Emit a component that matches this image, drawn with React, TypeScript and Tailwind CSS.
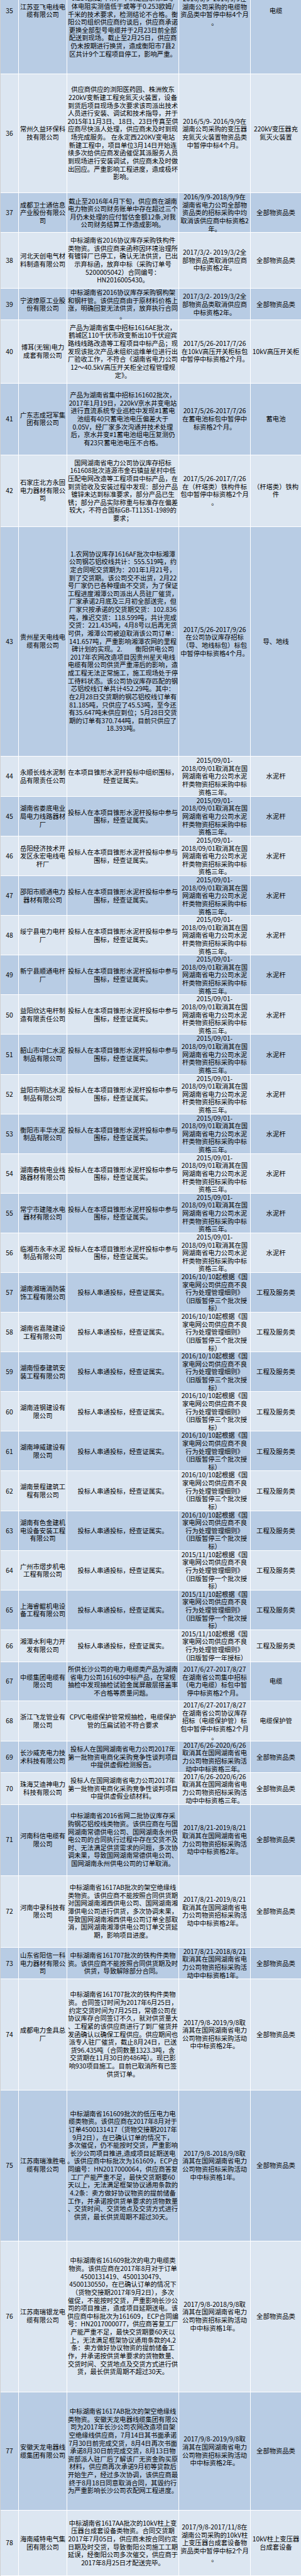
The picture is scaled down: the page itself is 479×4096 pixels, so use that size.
import React from 'react';
import clsx from 'clsx';

type Row = {
  n: number;
  h: string;
  c2: string[];
  c3: string[];
  c4: string[];
  c5: string[];
  c3Class?: string;
};

// shared cell texts
const poleText = ['投标人在本项目锥形水泥杆投标中参与', '围标，经查证属实。'];
const poleBan = ['2015/09/01-', '2018/09/01取消其在国', '网湖南省电力公司水泥', '杆类物资招标采购中标', '资格三年。'];
const collusion = ['投标人串通投标，经查证属实。'];
const ban2016 = ['2016/10/10起根据《国', '家电网公司供应商不良', '行为处理管理细则》', '（旧版暂停三个批次授', '标）'];
const ban2015 = ['2015/11/10起根据《国', '家电网公司供应商不良', '行为处理管理细则》', '（旧版暂停一个批次授', '标）'];
const all = ['全部物资品类'];
const pole = ['水泥杆'];
const works = ['工程及服务类'];
const ban2y = ['2017/3/2- 2019/3/2全', '部物资品类取消供应商', '中标资格2年。'];
const ban3y = ['2017/6/26-2020/6/26', '取消其在国网湖南省电', '力公司物资招标采购活', '动中中标资格三年。'];
const ban821 = ['2017/8/21-2019/8/21', '取消其在国网湖南省电', '力公司物资招标采购活', '动中中标资格2年。'];
const ban98one = ['2017/9/8-2018/9/8取', '消其在国网湖南省电力', '公司物资招标采购活动', '中中标资格1年。'];
const ban98two = ['2017/9/8-2019/9/8取', '消其在国网湖南省电力', '公司物资招标采购活动', '中中标资格2年。'];

const rows: Row[] = [
  {
    n: 35, h: 'h-[200px]', c2: ['江苏亚飞电线电', '缆有限公司'],
    c3: ['0.216欧姆/千米，不满足国家标准导', '体电阻实测值低于或等于0.253欧姆/', '千米的技术要求，检测结论不合格。衡', '阳公司组织供应商约谈后，供应商承诺', '更换全部型号电缆并于2月23日前全部', '配送到现场。截止至2月25日，供应商', '仍未按期进行换货，造成衡阳市7县2', '区共计9个工程项目停工，影响严重。'],
    c3Class: 'justify-end pb-[24.5px]',
    c4: ['2016/5/9- 2016/9/9在', '湖南公司采购的电缆物', '资品类中暂停中标4个月', '。'], c5: ['电缆'],
  },
  {
    n: 36, h: 'h-[189.4px]', c2: ['常州久益环保科', '技有限公司'],
    c3: ['供应商供应的浏阳医药园、株洲攸东', '220kV变新建工程充氮灭火装置，设备', '到货后项目现场多次要求该司派出技术', '人员进行安装、调试和技术指导，并于', '2015年11月3日、18日、23日传真至供', '应商尽快派人处理，供应商未及时到现', '场完成服务。 在永定西220KV变电站', '新建工程中，项目单位3月14日开始连', '续多次给供应商发函催促其派服务人员', '到现场进行安装调试，供应商未及时做', '出回应。严重影响工程进度，造成极坏', '影响。'],
    c4: ['2016/5/9- 2016/9/9在', '湖南公司采购的变压器', '充氮灭火装置物资品类', '中暂停中标4个月。'], c5: ['220kV变压器充', '氮灭火装置'],
  },
  {
    n: 37, h: 'h-[62.8px]', c2: ['成都卫士通信息', '产业股份有限公', '司'],
    c3: ['截止至2016年4月下旬，供应商在湖南', '电力物资公司财务账单中存在超过三个', '月仍未处理的应付暂估金额12条,对我', '公司财务结算工作造成影响。'],
    c4: ['2016/9/9-2018/9/9在', '湖南省电力公司全部物', '资品类的招标采购中均', '取消该供应商中标资格2', '年。'], c5: all,
  },
  {
    n: 38, h: 'h-[89px]', c2: ['河北天创电气材', '料制造有限公司'],
    c3: ['中标湖南省2016协议库存采购铁构件', '类物资。该供应商来函称因环境治理所', '有镀锌厂已停工，确认无法供货，已出', '示弃标函，放弃中标（采购订单号', '5200005042）合同编号：', 'HN2016005430。'],
    c4: ban2y, c5: all,
  },
  {
    n: 39, h: 'h-[49.9px]', c2: ['宁波燎原工业股', '份有限公司'],
    c3: ['中标湖南省2016协议库存采购钢构架', '和钢杆管。该供应商由于原材料价格上', '涨，明确回复无法供货，放弃执行合同', '。'],
    c4: ban2y, c5: all,
  },
  {
    n: 40, h: 'h-[101.2px]', c2: ['博耳(无锡)电力', '成套有限公司'],
    c3: ['产品为湖南省集中招标1616AE批次，', '鹤城区110千伏市政变新出10千伏迎宾', '路线线路改造等工程项目中标产品；现', '发现该批次产品未组织运维单位进行出', '厂验收工作，不符合《湖南省电力公司', '12～40.5kV高压开关柜全过程管理规', '定》。'],
    c4: ['2017/5/26-2017/7/26', '在10kV高压开关柜标包', '中暂停中标资格2个月。'], c5: ['10kV高压开关柜'],
  },
  {
    n: 41, h: 'h-[113.6px]', c2: ['广东志成冠军集', '团有限公司'],
    c3: ['产品为湖南省集中招标161602批次，', '2017年1月19日，220kV京水井变电站', '进行直流系统专业巡检中发现#1蓄电', '池组有40只蓄电池电压偏差大于', '0.05V，经厂家多次沟通并技术处理', '后，京水井变#1蓄电池组电压复测仍', '有23只蓄电池电压不合格。'],
    c4: ['2017/5/26-2017/7/26', '在蓄电池标包中暂停中', '标资格2个月。'], c5: ['蓄电池'],
  },
  {
    n: 42, h: 'h-[114px]', c2: ['石家庄北方永固', '电力器材有限公', '司'],
    c3: ['国网湖南省电力公司协议库存招标', '161608批次涟源市金石镇益星村中低', '压配电网改造等工程项目中标产品，在', '到货验收及安装过程中发现：部分产品', '镀锌未达到标准要求，部分产品已生', '锈；部分产品实际称重与标准存在偏差', '较大，不符合国标GB-T11351-1989的', '要求；'],
    c4: ['2017/5/26-2017/7/26', '在（杆塔类）铁构件标', '包中暂停中标资格2个月', '。'], c5: ['（杆塔类）铁构', '件'],
  },
  {
    n: 43, h: 'h-[365.5px]', c2: ['贵州星天电线电', '缆有限公司'],
    c3: ['1.农网协议库存1616AF批次中标湘潭', '公司钢芯铝绞线共计：555.519吨，约', '定合同呢交货期为：201年1月21号，', '到了交货期。该公司交不出货，2月22', '号厂家仍已各种理由不交货，为了保证', '工程进度湘潭公司派出人员驻厂催货，', '厂家承诺2月底及三月初全部送完，但', '厂家只按承诺的交货期交货：102.836', '吨，推迟交货：118.599吨，共计完成', '交货：221.435吨，4月8号以后再无货', '可供，湘潭公司被迫取消该公司订单：', '141.657吨，严重影响湘潭农网的里程', '碑计划的实现。2.　　衡阳供电公司', '2017年农网改造项目因贵州星天电线', '电缆有限公司供货严重滞后的影响，造', '成工程无法正常施工，施工现场处于停', '工待料状态。该公司协议库存匹配的钢', '芯铝绞线订单共计452.29吨。其中：', '在2月28日交货期的钢芯铝绞线订单有', '81.185吨，只供应了45.53吨，至今还', '有35.647吨未供应到位；5月28日交货', '期的订单有370.744吨，目前只供应了', '18.393吨。'],
    c4: ['2017/5/26-2017/9/26', '在公司协议库存招标', '（导、地线标包）标包', '中暂停中标资格4个月。'], c5: ['导、地线'],
  },
  { n: 44, h: 'h-[63.7px]', c2: ['永顺长线水泥制', '品有限责任公司'], c3: ['在本项目锥形水泥杆投标中组织围标，', '经查证属实。'], c4: poleBan, c5: pole },
  { n: 45, h: 'h-[63.1px]', c2: ['湖南省娄底电业', '局电力线路器材', '厂'], c3: poleText, c4: poleBan, c5: pole },
  { n: 46, h: 'h-[63.1px]', c2: ['岳阳经济技术开', '发区永宏电线电', '杆厂'], c3: poleText, c4: poleBan, c5: pole },
  { n: 47, h: 'h-[63.1px]', c2: ['邵阳市顺通电力', '器材有限公司'], c3: poleText, c4: poleBan, c5: pole },
  { n: 48, h: 'h-[63.1px]', c2: ['绥宁县电力电杆', '厂'], c3: poleText, c4: poleBan, c5: pole },
  { n: 49, h: 'h-[63.1px]', c2: ['新宁县顺通电杆', '厂'], c3: poleText, c4: poleBan, c5: pole },
  { n: 50, h: 'h-[63.1px]', c2: ['益阳欣达电杆制', '造有限责任公司'], c3: poleText, c4: poleBan, c5: pole },
  { n: 51, h: 'h-[63.1px]', c2: ['韶山市中仁水泥', '制品有限公司'], c3: poleText, c4: poleBan, c5: pole },
  { n: 52, h: 'h-[63.1px]', c2: ['益阳市明达水泥', '制品有限公司'], c3: poleText, c4: poleBan, c5: pole },
  { n: 53, h: 'h-[63.1px]', c2: ['衡阳市丰华水泥', '制品有限公司'], c3: poleText, c4: poleBan, c5: pole },
  { n: 54, h: 'h-[63.1px]', c2: ['湖南春桃电业线', '路器材有限公司'], c3: poleText, c4: poleBan, c5: pole },
  { n: 55, h: 'h-[63.1px]', c2: ['常宁市建隆水电', '器材有限公司'], c3: poleText, c4: poleBan, c5: pole },
  { n: 56, h: 'h-[63.1px]', c2: ['临湘市永丰水泥', '制品有限公司'], c3: poleText, c4: poleBan, c5: pole },
  { n: 57, h: 'h-[63.1px]', c2: ['湖南湘瑞消防装', '饰工程有限公司'], c3: collusion, c4: ban2016, c5: works },
  { n: 58, h: 'h-[63.1px]', c2: ['湖南省嘉隆建设', '工程有限公司'], c3: collusion, c4: ban2016, c5: works },
  { n: 59, h: 'h-[63.1px]', c2: ['湖南恒泰建筑安', '装工程有限公司'], c3: collusion, c4: ban2016, c5: works },
  { n: 60, h: 'h-[63.1px]', c2: ['湖南涟钢建设有', '限公司'], c3: collusion, c4: ban2016, c5: works },
  { n: 61, h: 'h-[63.1px]', c2: ['湖南坤威建设有', '限公司'], c3: collusion, c4: ban2016, c5: works },
  { n: 62, h: 'h-[63.1px]', c2: ['湖南景程建筑工', '程有限公司'], c3: collusion, c4: ban2016, c5: works },
  { n: 63, h: 'h-[63.1px]', c2: ['湖南有色金建机', '电设备安装工程', '有限公司'], c3: collusion, c4: ban2016, c5: works },
  { n: 64, h: 'h-[63.1px]', c2: ['广州市熠步机电', '工程有限公司'], c3: collusion, c4: ban2015, c5: works },
  { n: 65, h: 'h-[63.1px]', c2: ['上海睿鲲机电设', '备工程有限公司'], c3: collusion, c4: ban2015, c5: works },
  {
    n: 66, h: 'h-[50.8px]', c2: ['湘潭水利电力开', '发有限公司'], c3: collusion,
    c4: ['2015/11/10起根据《国', '家电网公司供应商不良', '行为处理管理细则》', '（旧版暂停一年授标）'], c5: works,
  },
  {
    n: 67, h: 'h-[62.5px]', c2: ['中缆集团电缆有', '限公司'],
    c3: ['所供长沙公司的电力电缆类产品为湖南', '省电力公司161609中标产品，在常规', '抽检中发现抽检试验金属屏蔽层搭盖率', '不合格等质量问题。'],
    c4: ['2017/6/27-2017/8/27', '在湖南省公司集中招标', '（电力电缆）标包中暂', '停中标资格2个月。'], c5: ['电缆'],
  },
  {
    n: 68, h: 'h-[63.7px]', c2: ['浙江飞龙管业有', '限公司'],
    c3: ['CPVC电缆保护管常规抽检，电缆保护', '管的压扁试验不符合要求'],
    c4: ['2017/6/27-2017/8/27', '在湖南省公司协议库存', '招标（电缆保护管）标', '包中暂停中标资格2个月', '。'], c5: ['电缆保护管'],
  },
  {
    n: 69, h: 'h-[49.9px]', c2: ['长沙威克电力技', '术科技有限公司'],
    c3: ['投标人在国网湖南省电力公司2017年', '第一批物资电商化采购竞争性谈判项目', '中提供虚假检测报告。'], c4: ban3y, c5: all,
  },
  {
    n: 70, h: 'h-[50.8px]', c2: ['珠海艾迪神电力', '科技有限公司'],
    c3: ['投标人在国网湖南省电力公司2017年', '第一批物资电商化采购竞争性谈判项目', '中提供虚假业绩材料。'], c4: ban3y, c5: all,
  },
  {
    n: 71, h: 'h-[113.1px]', c2: ['河南科信电缆有', '限公司'],
    c3: ['中标湖南省2016省网二批协议库存采', '购钢芯铝绞线类物资。该供应商在与国', '网湖南常德供电公司、国网湖南永州供', '电公司的合同执行过程中存在交货不及', '时、无法满足供货需求的问题，多次协', '调未果，导致国网湖南常德供电公司、', '国网湖南永州供电公司的订单取消。'],
    c4: ban821, c5: all,
  },
  {
    n: 72, h: 'h-[114.2px]', c2: ['河南中录科技有', '限公司'],
    c3: ['中标湖南省1617AB批次的架空绝缘线', '类物资。该供应商不能按照合同供货期', '对国网湖南湘西供电公司、国网湖南湘', '潭供电公司进行供货，多次协调未果，', '导致国网湖南湘西供电公司订单全部取', '消，国网湖南湘潭供电公司订单交货延', '期，影响项目进度。'],
    c4: ban821, c5: all,
  },
  {
    n: 73, h: 'h-[50.2px]', c2: ['山东省阳信一科', '电力器材有限公', '司'],
    c3: ['中标湖南省161707批次的铁构件类物', '资。该供应商不能按照合同供货期及时', '供货，导致解除部分合同。'],
    c4: ['2017/8/21-2018/8/21', '取消其在国网湖南省电', '力公司物资招标采购活', '动中中标资格1年。'], c5: all,
  },
  {
    n: 74, h: 'h-[176.7px]', c2: ['成都电力金具总', '厂'],
    c3: ['中标湖南省161707批次的铁构件类物', '资。合同签订时间为2017年6月25日，', '约定交货时间为7月25日，常德公司在', '协议库存合同签订不久，就对供货量大', '、工程紧的该供应商进行了到厂催货并', '发函确认以确保工程供应。供应期间也', '派专人驻厂催货，截止8月24日，已送', '货96.435吨（合同数量1323.3吨，含', '交货期在11月30日的486吨）。现已影', '响930项目施工。目前已取消所有已签', '供货订单。'],
    c4: ban98two, c5: all,
  },
  {
    n: 75, h: 'h-[239.9px]', c2: ['江苏南瑞淮胜电', '缆有限公司'],
    c3: ['中标湖南省161609批次的低压电力电', '缆类物资。该供应商在2017年8月对于', '订单4500131417（货物交接期2017年', '9月2日），在已确认订单的情况下，', '多次催促，仍不能按时交货，严重影响', '长沙公司项目推进,造成项目延期送电', '。该供应商中标批次为161609，ECP合', '同编号：HN2017000064，供应商答复', '工厂产能严重不足，最快交货期要60', '天以上，无法满足框架协议通用条款的', '4.2条：卖方做好协议物资的提前储备', '工作，并承诺按供货单要求的货物数量', '、交货时间、交货地点及交货方式进行', '供货，最长供货周期不超过30天。'],
    c4: ban98one, c5: all,
  },
  {
    n: 76, h: 'h-[240.1px]', c2: ['江苏南瑞银龙电', '缆有限公司'],
    c3: ['中标湖南省161609批次的电力电缆类', '物资。该供应商在2017年8月对于订单', '4500131419、4500130479、', '4500130550，在已确认订单的情况下', '（货物交接期2017年9月2日），多次', '催促，不能按时交货，严重影响长沙公', '司的项目推进，造成项目延期送电。该', '供应商中标批次为161609，ECP合同编', '号：HN2017000077，供应商答复工厂', '产能严重不足，最快交货期要60天以', '上，无法满足框架协议通用条款的4.2', '条：卖方做好协议物资的提前储备工', '作，并承诺按供货单要求的货物数量、', '交货时间、交货地点及交货方式进行供', '货，最长供货周期不超过30天。'],
    c4: ban98one, c5: all,
  },
  {
    n: 77, h: 'h-[188.8px]', c2: ['安徽天龙电器线', '缆集团有限公司'],
    c3: ['中标湖南省1617AB批次的架空绝缘线', '类物资。安徽天龙电器线缆集团有限公', '司为2017年长沙公司农网改造项目架', '空绝缘线供应商，7月14日其书面承诺', '7月30日前完成交货，8月4日再次书面', '承诺8月30日前完成交货，8月13日物', '资部派人驻厂后了解该厂无资金购买原', '材料，供应商再次承诺9月初等贷款后', '开始生产，经过多次协调，该供应商最', '终于8月18日同意取消合同，其毁约行', '为严重影响长沙公司农配网工程进度。'],
    c4: ban98two, c5: all,
  },
  {
    n: 78, h: 'h-[103.4px]', c2: ['海南威特电气集', '团有限公司'],
    c3: ['中标湖南省1617AA批次的10kV柱上变', '压器台成套设备类物资。合同交货期', '2017年7月05日，供应商未按合同约定', '日期及时交货，导致衡阳公司施工工期', '延误，经衡阳公司多次催交，供应商于', '2017年8月25日才配送完毕。'],
    c4: ['2017/9/8-2017/11/8在', '湖南公司采购的10kV柱', '上变压器台成套设备物', '资品类中暂停中标2个月', '。'], c5: ['10kV柱上变压器', '台成套设备'],
  },
];

function Cell({ lines, className }: { lines: string[]; className?: string }) {
  return (
    <div className={clsx('flex flex-col items-center border-r border-white', className ?? 'justify-center')}>
      {lines.map((l, i) => (
        <div key={i} className="whitespace-pre text-center">
          {l}
        </div>
      ))}
    </div>
  );
}

export default function App() {
  return (
    <div className="w-[479px] overflow-hidden bg-white">
      <div className="-mt-[82.2px] border-l border-[#d0d0d0] font-['Noto_Sans_CJK_SC','Noto_Sans',sans-serif] text-[10.3px] leading-[12.62px] text-black">
        {rows.map((r) => (
          <div
            key={r.n}
            className={clsx(
              'grid grid-cols-[29px_77px_178px_114px_1fr] border-b border-white',
              r.h,
              r.n % 2 === 1 ? 'bg-[#b8cce4]' : 'bg-[#dce6f1]'
            )}
          >
            <Cell lines={[String(r.n)]} />
            <Cell lines={r.c2} />
            <Cell lines={r.c3} className={r.c3Class} />
            <Cell lines={r.c4} />
            <Cell lines={r.c5} className="justify-center border-r-0" />
          </div>
        ))}
      </div>
    </div>
  );
}
